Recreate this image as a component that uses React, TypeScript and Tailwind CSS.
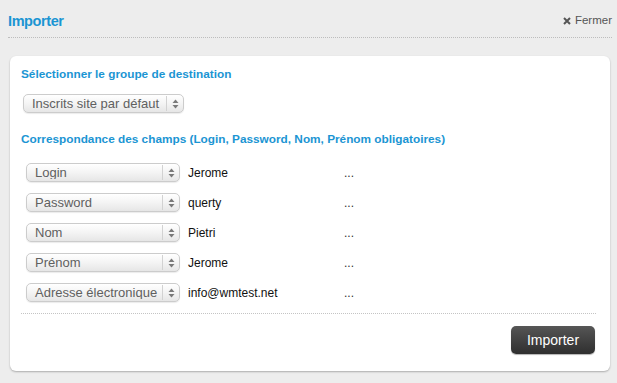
const rows = [
    { field: "Login", value: "Jerome" },
    { field: "Password", value: "querty" },
    { field: "Nom", value: "Pietri" },
    { field: "Prénom", value: "Jerome" },
    { field: "Adresse électronique", value: "info@wmtest.net" },
];

function Arrows() {
    return (
        <svg width="7" height="10" viewBox="0 0 7 10" className="shrink-0">
            <path d="M3.5 0.5 L6.5 4 L0.5 4 Z" fill="#7a7a7a" />
            <path d="M3.5 9.5 L6.5 6 L0.5 6 Z" fill="#7a7a7a" />
        </svg>
    );
}

function FakeSelect({ label, width }: { label: string; width: string }) {
    return (
        <div className={`${width} h-[19px] flex items-center rounded-[5px] border border-[#cccccc] bg-gradient-to-b from-[#ffffff] via-[#f4f4f4] to-[#e6e6e6] shadow-[0_1px_1px_rgba(0,0,0,0.08)]`}>
            <span className="flex-1 pl-[8px] text-[13px] leading-none text-[#606060] whitespace-nowrap overflow-hidden">{label}</span>
            <div className="h-[15px] w-[17px] border-l border-[#d2d2d2] flex items-center justify-center">
                <Arrows />
            </div>
        </div>
    );
}

export default function App() {
    return (
        <div className="w-[617px] h-[383px] bg-[#ededed] pl-[8px] pr-[5px] pt-[11px] font-['Liberation_Sans',Arial,sans-serif] overflow-hidden">
            <div className="flex items-center justify-between h-[20px]">
                <h1 className="text-[14.5px] font-bold tracking-[-0.4px] text-[#1b95d3] leading-none">Importer</h1>
                <div className="flex items-center gap-[4px] text-[11.5px] text-[#555] leading-none">
                    <svg width="8" height="8" viewBox="0 0 8 8">
                        <path d="M1 1 L7 7 M7 1 L1 7" stroke="#555" strokeWidth="2" />
                    </svg>
                    Fermer
                </div>
            </div>
            <div className="mt-[6px] border-b border-dotted border-[#bdbdbd]" />

            <div className="mt-[18px] ml-[2px] mr-[2px] h-[315px] bg-white rounded-[6px] shadow-[0_1px_2px_rgba(0,0,0,0.28)] pl-[11px] pr-[14px] pt-[11px] flex flex-col">
                <h2 className="text-[11.8px] font-bold text-[#1b95d3] leading-[14px]">Sélectionner le groupe de destination</h2>
                <div className="mt-[13px] ml-[2px]">
                    <FakeSelect label="Inscrits site par défaut" width="w-[161px]" />
                </div>
                <h2 className="mt-[19px] text-[11.8px] font-bold text-[#1b95d3] leading-[14px]">Correspondance des champs (Login, Password, Nom, Prénom obligatoires)</h2>

                <div className="mt-[17px] ml-[5px] flex flex-col gap-[11px]">
                    {rows.map((row) => (
                        <div key={row.field} className="flex items-center h-[19px]">
                            <FakeSelect label={row.field} width="w-[154px]" />
                            <span className="ml-[8px] w-[156px] text-[12px] text-[#111]">{row.value}</span>
                            <span className="text-[12px] text-[#333] leading-none">...</span>
                        </div>
                    ))}
                </div>

                <div className="mt-[11px] border-b border-dotted border-[#c4c4c4]" />

                <div className="flex justify-end mt-[12px] pr-[1px]">
                    <button className="w-[84px] h-[28px] rounded-[5px] bg-gradient-to-b from-[#565656] to-[#2f2f2f] text-white text-[14px] shadow-[0_1px_1px_rgba(0,0,0,0.3)]">
                        Importer
                    </button>
                </div>
            </div>
        </div>
    );
}
